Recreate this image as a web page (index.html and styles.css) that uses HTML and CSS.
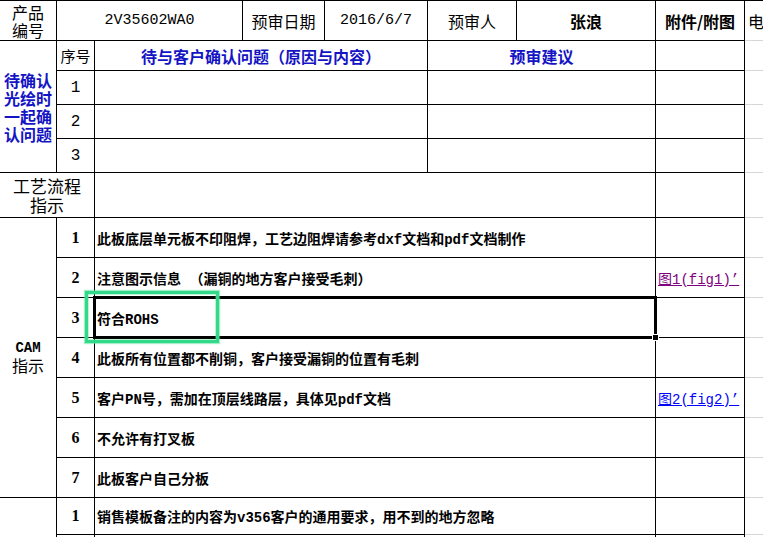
FILE: index.html
```html
<!DOCTYPE html>
<html lang="zh-CN">
<head>
<meta charset="utf-8">
<title>预审表</title>
<link rel="stylesheet" href="styles.css">
</head>
<body>
<div class="sheet">
  <div class="grid">
    <!-- row 1 -->
    <div class="c ctr h16 lh18">产品<br>编号</div>
    <div class="c ctr span2 mono15">2V35602WA0</div>
    <div class="c ctr h16">预审日期</div>
    <div class="c ctr mono15">2016/6/7</div>
    <div class="c ctr h16">预审人</div>
    <div class="c ctr h16 b">张浪</div>
    <div class="c ctr h16 b">附件/附图</div>
    <div class="c x h16">电话</div>

    <!-- row 2 -->
    <div class="c ctr rows4 h16 b blue lh18">待确认<br>光绘时<br>一起确<br>认问题</div>
    <div class="c ctr h15">序号</div>
    <div class="c ctr span3 h16 b blue">待与客户确认问题（原因与内容）</div>
    <div class="c ctr span2 h16 b blue">预审建议</div>
    <div class="c"></div>
    <div class="c x"></div>

    <!-- rows 3-5 -->
    <div class="c ctr num">1</div>
    <div class="c span3"></div>
    <div class="c span2"></div>
    <div class="c"></div>
    <div class="c x"></div>

    <div class="c ctr num">2</div>
    <div class="c span3"></div>
    <div class="c span2"></div>
    <div class="c"></div>
    <div class="c x"></div>

    <div class="c ctr num">3</div>
    <div class="c span3"></div>
    <div class="c span2"></div>
    <div class="c"></div>
    <div class="c x"></div>

    <!-- row 6 -->
    <div class="c ctr span2 h17 lh19">工艺流程<br>指示</div>
    <div class="c span5"></div>
    <div class="c"></div>
    <div class="c x"></div>

    <!-- CAM rows -->
    <div class="c ctr rows7 cam"><span class="cam-en">CAM</span><span class="cam-zh">指示</span></div>
    <div class="c ctr bnum">1</div>
    <div class="c span5 txt">此板底层单元板不印阻焊，工艺边阻焊请参考dxf文档和pdf文档制作</div>
    <div class="c"></div>
    <div class="c x"></div>

    <div class="c ctr bnum">2</div>
    <div class="c span5 txt">注意图示信息 （漏铜的地方客户接受毛刺）</div>
    <div class="c link"><span class="visited">图1(fig1)’</span></div>
    <div class="c x"></div>

    <div class="c ctr bnum">3</div>
    <div class="c span5 txt">符合ROHS</div>
    <div class="c"></div>
    <div class="c x"></div>

    <div class="c ctr bnum">4</div>
    <div class="c span5 txt">此板所有位置都不削铜，客户接受漏铜的位置有毛刺</div>
    <div class="c"></div>
    <div class="c x"></div>

    <div class="c ctr bnum">5</div>
    <div class="c span5 txt">客户PN号，需加在顶层线路层，具体见pdf文档</div>
    <div class="c link"><span class="fresh">图2(fig2)’</span></div>
    <div class="c x"></div>

    <div class="c ctr bnum">6</div>
    <div class="c span5 txt">不允许有打叉板</div>
    <div class="c"></div>
    <div class="c x"></div>

    <div class="c ctr bnum">7</div>
    <div class="c span5 txt">此板客户自己分板</div>
    <div class="c"></div>
    <div class="c x"></div>

    <!-- sales rows -->
    <div class="c rows2"></div>
    <div class="c ctr bnum">1</div>
    <div class="c span5 txt">销售模板备注的内容为v356客户的通用要求，用不到的地方忽略</div>
    <div class="c"></div>
    <div class="c x"></div>

    <div class="c ctr bnum"></div>
    <div class="c span5 txt"></div>
    <div class="c"></div>
    <div class="c x"></div>
  </div>

  <div class="active-cell"><span class="handle"></span></div>
  <div class="highlight"></div>
</div>
</body>
</html>
```

FILE: styles.css
```css
html, body {
  margin: 0;
  padding: 0;
  background: #fff;
  overflow: hidden;
}

body {
  width: 763px;
  height: 537px;
  font-family: "Liberation Mono", "Noto Sans CJK SC", monospace;
  color: #000;
}

.sheet {
  position: relative;
  width: 805px;
}

.grid {
  display: grid;
  grid-template-columns: 57px 38px 148px 82px 103px 89px 139px 89px 60px;
  grid-template-rows: 40px 30px 34px 34px 34px 45px 40px 40px 40px 40px 40px 40px 40px 37px 40px;
  border-top: 1px solid #000;
}

.c {
  box-sizing: border-box;
  border-right: 1px solid #000;
  border-bottom: 1px solid #000;
  display: flex;
  align-items: center;
  min-width: 0;
  overflow: hidden;
  white-space: nowrap;
}

.x {
  border-right: none;
  border-bottom: 1px solid #d6d6d6;
  padding-left: 3px;
  font-weight: normal;
}

.ctr {
  justify-content: center;
  text-align: center;
}

.span2 { grid-column: span 2; }
.span3 { grid-column: span 3; }
.span5 { grid-column: span 5; }
.rows2 { grid-row: span 2; }
.rows4 { grid-row: span 4; }
.rows7 { grid-row: span 7; }

.h15 { font-family: "Noto Sans CJK SC", sans-serif; font-size: 15px; }
.h16 { font-family: "Noto Sans CJK SC", "Liberation Mono", sans-serif; font-size: 16px; }
.h17 { font-family: "Noto Sans CJK SC", sans-serif; font-size: 17px; }
.lh18 { line-height: 18px; }
.lh19 { line-height: 19px; }
.b { font-weight: bold; }
.blue { color: #1414c4; }

.mono15 {
  font-size: 15px;
}

.num {
  font-size: 16px;
}

.bnum {
  font-family: "Liberation Serif", serif;
  font-weight: bold;
  font-size: 16px;
}

.txt {
  font-size: 14px;
  font-weight: bold;
  padding-left: 2px;
}

.cam {
  flex-direction: column;
}

.cam-en {
  font-family: "Liberation Mono", monospace;
  font-weight: bold;
  font-size: 14px;
  line-height: 15px;
}

.cam-zh {
  font-family: "Noto Sans CJK SC", sans-serif;
  font-size: 16px;
  line-height: 18px;
}

.link {
  font-size: 14px;
  padding-left: 2px;
}

.visited {
  color: #800080;
  text-decoration: underline;
}

.fresh {
  color: #0000ff;
  text-decoration: underline;
}

.active-cell {
  position: absolute;
  left: 93px;
  top: 296px;
  width: 564px;
  height: 43px;
  box-sizing: border-box;
  border: 3px double #000;
}

.handle {
  position: absolute;
  right: -5px;
  bottom: -5px;
  width: 5px;
  height: 5px;
  background: #000;
  border: 1px solid #fff;
}

.highlight {
  position: absolute;
  left: 85px;
  top: 291px;
  width: 134px;
  height: 52px;
  box-sizing: border-box;
  border: 3px solid #33d98a;
  box-shadow: 0 0 1px 1px rgba(90, 225, 150, 0.55), inset 0 0 1px 1px rgba(90, 225, 150, 0.45);
}
```
